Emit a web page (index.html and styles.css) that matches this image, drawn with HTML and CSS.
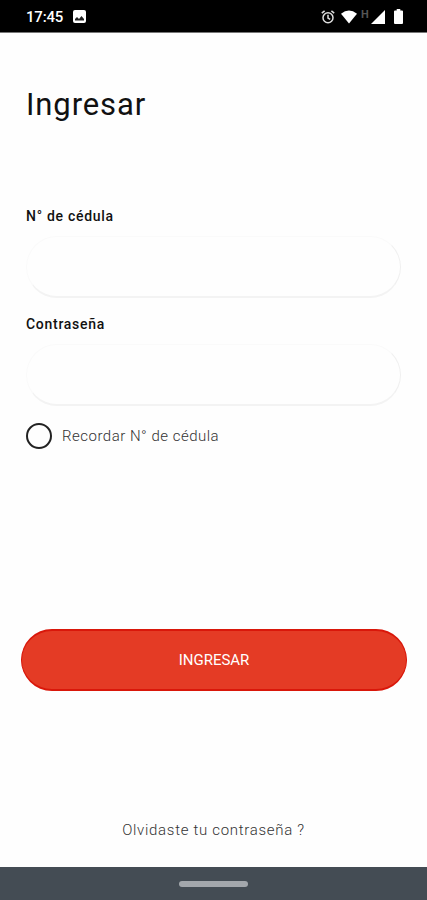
FILE: index.html
```html
<!DOCTYPE html>
<html lang="es">
<head>
    <meta charset="UTF-8">
    <meta name="viewport" content="width=device-width, initial-scale=1.0">
    <title>Ingresar</title>
    <link rel="stylesheet" href="styles.css">
</head>
<body>
    <div class="status-bar">
        <span class="time">17:45</span>
        <svg class="photo" width="13" height="13" viewBox="0 0 13 13">
            <rect width="13" height="13" rx="2" fill="#fff"/>
            <path d="M2 10.5V9l2-2 2 2 2.5-3L11 9v1.5z" fill="#222"/>
        </svg>
        <div class="status-icons">
            <svg width="14" height="14" viewBox="0 0 14 14" fill="none" stroke="#ddd" stroke-width="1.5">
                <circle cx="7" cy="7.7" r="5"/>
                <path d="M7 4.8v3.3l2.2 1.3M.8 3.2L3.6.9M13.2 3.2L10.4.9"/>
            </svg>
            <svg class="wifi" width="16" height="14" viewBox="0 0 16 14" fill="#fff">
                <path d="M0 3.7Q8-2.6 16 3.7L8 13.5z"/>
            </svg>
            <span class="network">H</span>
            <svg class="signal" width="14" height="14" viewBox="0 0 14 14" fill="#fff">
                <path d="M14 0v14H0z"/>
            </svg>
            <svg class="battery" width="9" height="15" viewBox="0 0 9 15" fill="#fff">
                <path d="M2.7 0h3.6v1.6H8q1 0 1 1V14q0 1-1 1H1q-1 0-1-1V2.6q0-1 1-1h1.7z"/>
            </svg>
        </div>
    </div>

    <form class="login">
        <h1>Ingresar</h1>

        <label class="label" for="cedula">N° de cédula</label>
        <input class="field" type="text" id="cedula">

        <label class="label second" for="clave">Contraseña</label>
        <input class="field" type="password" id="clave">

        <label class="remember">
            <input class="check" type="checkbox">
            <span>Recordar N° de cédula</span>
        </label>

        <button class="submit" type="button">INGRESAR</button>
        <a class="forgot">Olvidaste tu contraseña ?</a>
    </form>

    <div class="nav-bar">
        <div class="handle"></div>
    </div>
</body>
</html>
```
FILE: styles.css
```css
*{
    box-sizing: border-box;
}
body{
    display: flex;
    flex-direction: column;
    height: 900px;
    margin: 0;
    background-color: #fefefe;
    font-family: Roboto, "Noto Sans", sans-serif;
    color: #111;
}
.status-bar{
    display: flex;
    align-items: center;
    height: 33px;
    padding: 1px 24px 0 26px;
    background-color: #000;
    border-bottom: 1px solid #777;
    color: #fff;
}
.time{
    width: 37px;
    font-size: 15px;
    font-weight: 500;
    line-height: 20px;
    letter-spacing: -0.2px;
    white-space: nowrap;
}
.photo{
    margin-left: 10px;
}
.status-icons{
    display: flex;
    align-items: center;
    margin-left: auto;
}
.wifi{
    margin-left: 6px;
}
.network{
    width: 9px;
    margin: -3px 0 0 4px;
    font-size: 11px;
    font-weight: bold;
    line-height: 12px;
    color: #555;
}
.signal{
    margin-left: 1px;
}
.battery{
    margin-left: 9px;
}
.login{
    display: flex;
    flex-direction: column;
    flex: 1;
    padding: 53px 26px 0;
}
h1{
    height: 38px;
    margin: 0 0 82px;
    font-size: 31px;
    font-weight: 400;
    line-height: 38px;
    letter-spacing: 0.9px;
}
.label{
    height: 20px;
    font-size: 14px;
    font-weight: 500;
    line-height: 20px;
    letter-spacing: 0.72px;
}
.second{
    margin-top: 16px;
}
.field{
    width: 375px;
    height: 62px;
    margin: 10px 0 0;
    padding: 0 26px;
    border: 1px solid #fafafa;
    border-right-color: #f0f0f0;
    border-bottom: 2px solid #f3f3f3;
    border-radius: 31px;
    background-color: #fefefe;
    font: inherit;
    outline: none;
}
.remember{
    display: flex;
    align-items: center;
    height: 26px;
    margin-top: 17px;
    font-size: 15px;
    font-weight: 300;
    letter-spacing: 0.5px;
    color: #333;
}
.check{
    appearance: none;
    width: 26px;
    height: 26px;
    margin: 0 10px 0 0;
    border: 2px solid #222;
    border-radius: 50%;
}
.submit{
    height: 62px;
    margin: 180px -6px 0 -5px;
    padding: 0;
    border: 2px solid #d9170a;
    border-right-width: 1px;
    border-left-width: 1px;
    border-radius: 31px;
    background-color: #e43b25;
    color: #fff;
    font-family: inherit;
    font-size: 15px;
    font-weight: 400;
}
.forgot{
    margin-top: 129px;
    font-size: 15px;
    font-weight: 300;
    line-height: 20px;
    letter-spacing: 0.7px;
    text-align: center;
    color: #333;
}
.nav-bar{
    display: flex;
    justify-content: center;
    align-items: center;
    height: 33px;
    background-color: #444c54;
}
.handle{
    width: 69px;
    height: 6px;
    border-radius: 3px;
    background-color: #a3a7ac;
}
```
